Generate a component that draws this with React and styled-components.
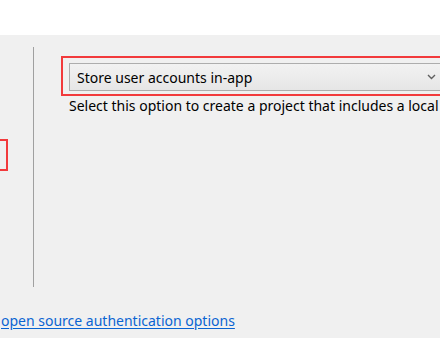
import React from "react";
import styled, { createGlobalStyle } from "styled-components";

const Global = createGlobalStyle`
  html, body {
    margin: 0;
    padding: 0;
    width: 440px;
    height: 338px;
    overflow: hidden;
    background: #f0f0f0;
    font-family: "Noto Sans", "Open Sans", sans-serif;
    color: #000;
  }
`;

const Header = styled.div`
  height: 35px;
  background: #ffffff;
`;

const Body = styled.div`
  display: flex;
  padding-top: 12px;
  height: 240px;
`;

const LeftCol = styled.div`
  width: 33px;
  padding-top: 92px;
  box-sizing: border-box;
  overflow: visible;
`;

const LeftHighlight = styled.div`
  margin-left: -100px;
  width: 104px;
  height: 28px;
  border: 2px solid #f23a3c;
`;

const Separator = styled.div`
  width: 1px;
  height: 240px;
  background: #a0a0a0;
  flex-shrink: 0;
`;

const RightCol = styled.div`
  padding-left: 27px;
  padding-top: 9px;
  flex: 1;
  min-width: 0;
`;

const Highlight = styled.div`
  width: 500px;
  border: 2px solid #f23a3c;
  border-right: none;
  padding: 5px 0 3px 6px;
`;

const Combo = styled.div`
  width: 378px;
  height: 28px;
  box-sizing: border-box;
  border: 1px solid #adadad;
  background: linear-gradient(#f2f2f2, #e6e6e6);
  display: flex;
  align-items: center;
  justify-content: space-between;
  padding: 0 10px 0 7px;
  font-size: 14px;
`;

const Description = styled.div`
  margin-left: 8px;
  font-size: 14px;
  line-height: 20px;
  white-space: nowrap;
`;

const Footer = styled.div`
  padding-top: 22px;
`;

const Link = styled.a`
  color: #0a64d2;
  font-size: 14px;
  text-decoration: underline;
  text-underline-offset: 2px;
  margin-left: 1px;
  cursor: pointer;
`;

const Chevron = () => (
  <svg width="9" height="6" viewBox="0 0 9 6">
    <path d="M1 1 L4.5 4.5 L8 1" fill="none" stroke="#606060" strokeWidth="1.4" />
  </svg>
);

export default function App() {
  return (
    <>
      <Global />
      <Header />
      <Body>
        <LeftCol>
          <LeftHighlight />
        </LeftCol>
        <Separator />
        <RightCol>
          <Highlight>
            <Combo>
              <span>Store user accounts in-app</span>
              <Chevron />
            </Combo>
          </Highlight>
          <Description>
            Select this option to create a project that includes a local user accounts store.
          </Description>
        </RightCol>
      </Body>
      <Footer>
        <Link>open source authentication options</Link>
      </Footer>
    </>
  );
}
